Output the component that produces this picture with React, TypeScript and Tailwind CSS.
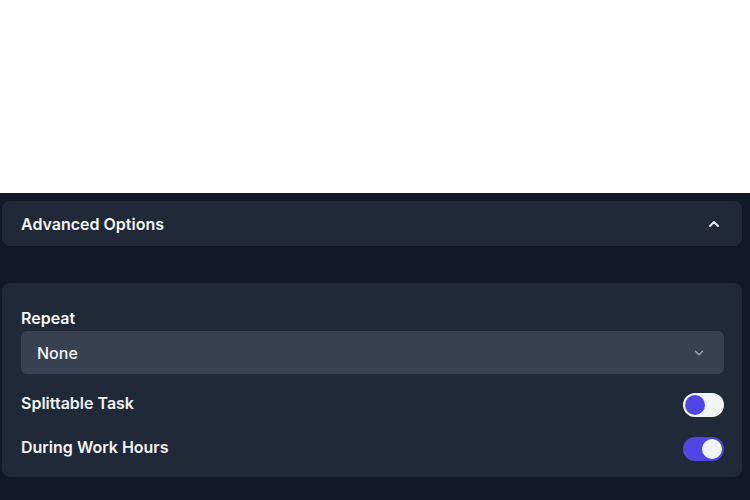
import { ChevronDown, ChevronUp } from "lucide-react";

function Toggle({ on }: { on: boolean }) {
  return (
    <div
      className={
        on
          ? "flex h-[24px] w-[41px] items-center justify-end rounded-full bg-[#4f46e5] px-[2px]"
          : "flex h-[24px] w-[41px] items-center justify-start rounded-full bg-[#f3f4f6] px-[2px]"
      }
    >
      <div className={on ? "h-[20px] w-[20px] rounded-full bg-[#f3f4f6]" : "h-[20px] w-[20px] rounded-full bg-[#4f46e5]"} />
    </div>
  );
}

export default function App() {
  return (
    <div className="flex h-[500px] w-[750px] flex-col bg-white font-['Inter',sans-serif]">
      <div className="h-[193px] shrink-0 bg-white" />
      <div className="flex flex-1 flex-col bg-[#111827] pl-[2px] pr-[8px] pt-[8px]">
        <div className="flex h-[45px] items-center justify-between rounded-lg bg-[#1f2937] pl-[19px] pr-[20px]">
          <span className="text-[16px] font-semibold leading-6 text-[#f3f4f6]">Advanced Options</span>
          <ChevronUp className="h-[16px] w-[16px] text-[#e5e7eb]" strokeWidth={3} />
        </div>
        <div className="mt-[37px] flex flex-col rounded-lg bg-[#1f2937] pb-[16px] pl-[19px] pr-[18px] pt-[23px]">
          <label className="text-[16px] font-semibold leading-6 text-[#f3f4f6]">Repeat</label>
          <div className="mt-px flex h-[43px] items-center justify-between rounded-md bg-[#374151] pl-[16px] pr-[18px]">
            <span className="text-[16px] font-medium text-[#f3f4f6]">None</span>
            <ChevronDown className="h-[14px] w-[14px] text-[#9ca3af]" strokeWidth={2.5} />
          </div>
          <div className="mt-[19px] flex items-start justify-between">
            <span className="text-[16px] font-semibold leading-5 text-[#f3f4f6]">Splittable Task</span>
            <Toggle on={false} />
          </div>
          <div className="mt-[20px] flex items-start justify-between">
            <span className="text-[16px] font-semibold leading-5 text-[#f3f4f6]">During Work Hours</span>
            <Toggle on={true} />
          </div>
        </div>
      </div>
    </div>
  );
}
